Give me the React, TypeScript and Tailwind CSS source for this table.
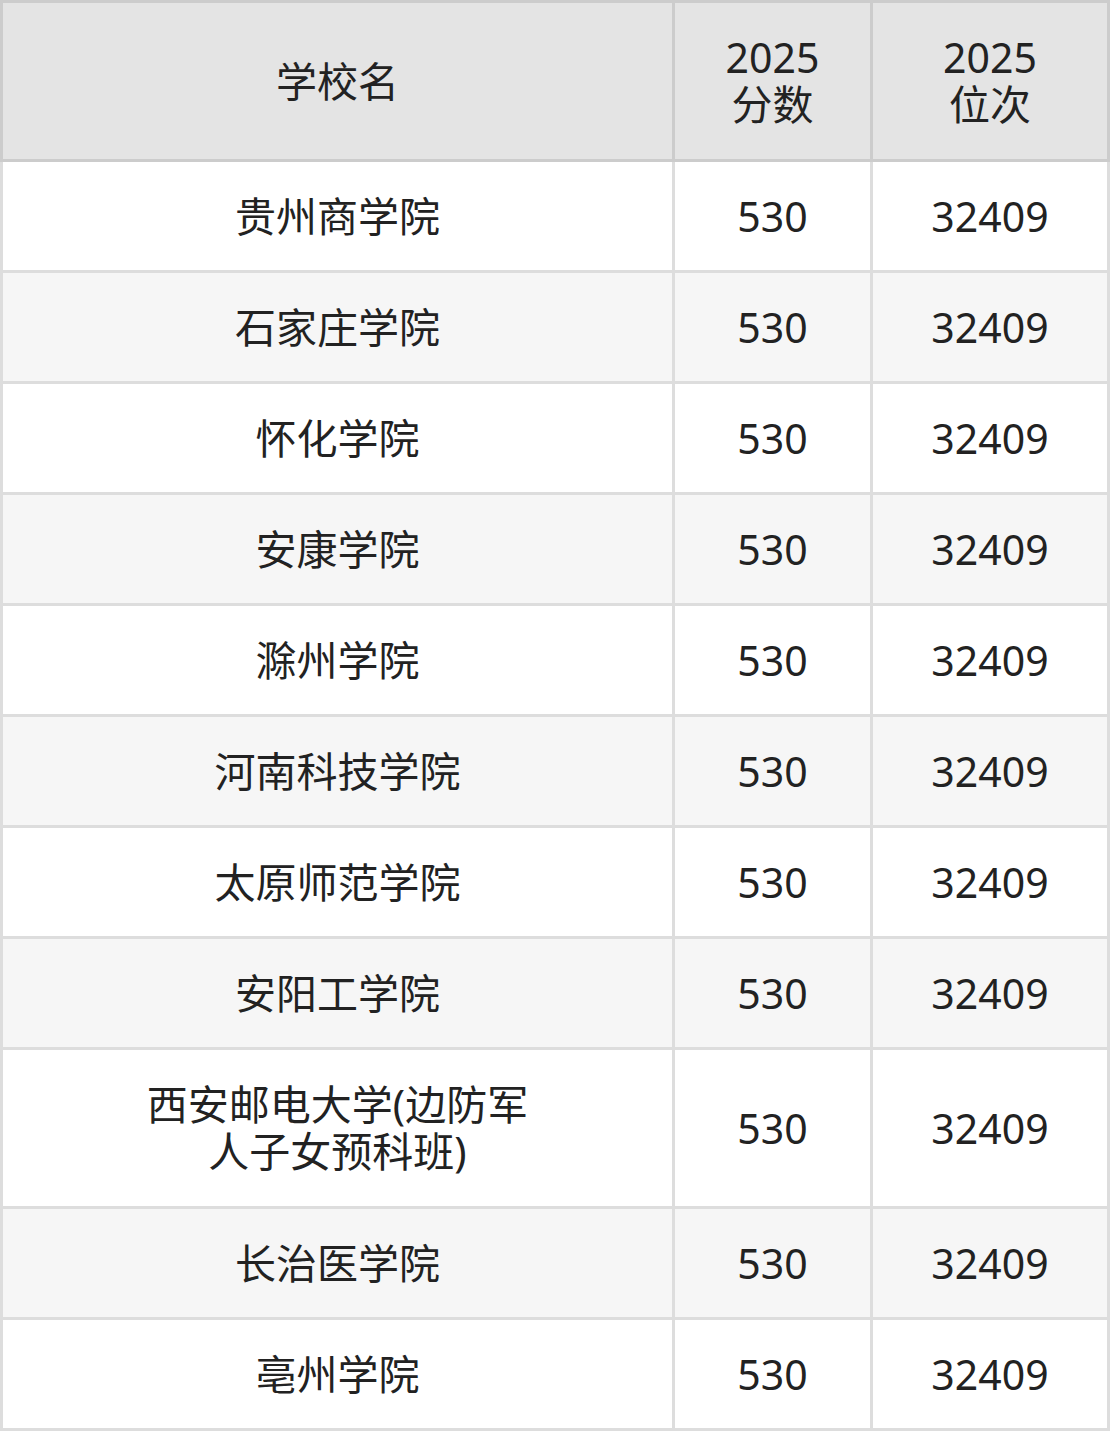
import React from "react";

const rows = [
  "贵州商学院",
  "石家庄学院",
  "怀化学院",
  "安康学院",
  "滁州学院",
  "河南科技学院",
  "太原师范学院",
  "安阳工学院",
  "西安邮电大学(边防军人子女预科班)",
  "长治医学院",
  "亳州学院",
];

export default function App() {
  return (
    <div
      className="w-[1110px] text-[#222222] text-[41px] leading-[47px]"
      style={{ fontFamily: '"Noto Sans", "Noto Sans CJK SC", sans-serif' }}
    >
      <div className="grid grid-cols-[669px_195px_234px] gap-x-[3px] border-[3px] border-[#cccccc] bg-[#cccccc]">
        <div className="h-[156px] bg-[#e4e4e4] flex items-center justify-center text-center">学校名</div>
        <div className="h-[156px] bg-[#e4e4e4] flex items-center justify-center text-center">2025<br />分数</div>
        <div className="h-[156px] bg-[#e4e4e4] flex items-center justify-center text-center">2025<br />位次</div>
      </div>
      <div className="flex flex-col gap-y-[3px] border-x-[3px] border-b-[3px] border-[#dddddd] bg-[#dddddd]">
        {rows.map((name, i) => {
          const bg = i % 2 === 1 ? "bg-[#f6f6f6]" : "bg-white";
          const h = name.length > 12 ? "h-[156px]" : "h-[108px]";
          return (
            <div key={i} className="grid grid-cols-[669px_195px_234px] gap-x-[3px]">
              <div className={`${bg} ${h} flex items-center justify-center text-center px-[138px]`}>{name}</div>
              <div className={`${bg} ${h} flex items-center justify-center`}>530</div>
              <div className={`${bg} ${h} flex items-center justify-center`}>32409</div>
            </div>
          );
        })}
      </div>
    </div>
  );
}
